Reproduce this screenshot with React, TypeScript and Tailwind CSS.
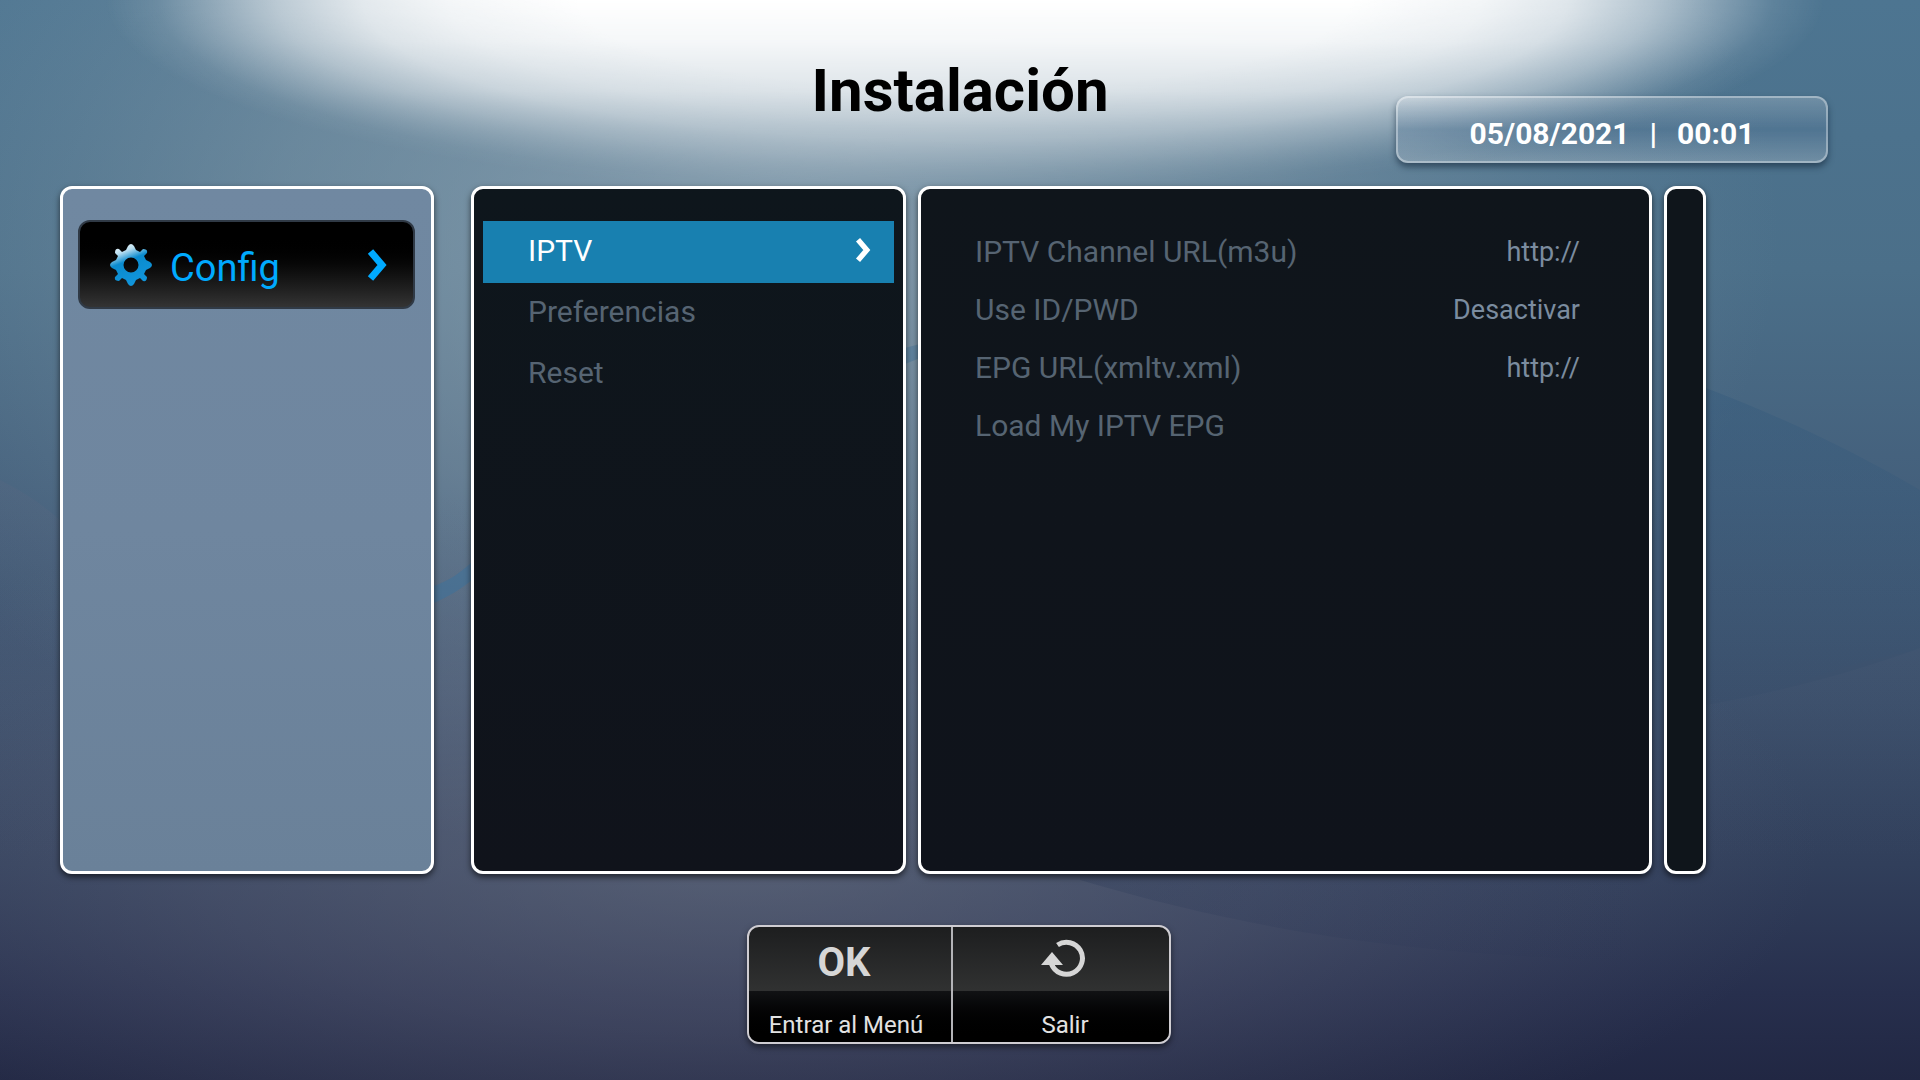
import type { ReactNode } from "react"

const menuItems = ["IPTV", "Preferencias", "Reset"]

const settings = [
  { label: "IPTV Channel URL(m3u)", value: "http://" },
  { label: "Use ID/PWD", value: "Desactivar" },
  { label: "EPG URL(xmltv.xml)", value: "http://" },
  { label: "Load My IPTV EPG", value: "" },
]

function Backdrop() {
  return (
    <svg
      className="absolute inset-0 h-full w-full"
      viewBox="0 0 1920 1080"
      preserveAspectRatio="none"
      aria-hidden="true"
    >
      <defs>
        <linearGradient id="base" x1="0" y1="0" x2="0" y2="1">
          <stop offset="0" stopColor="#4d7591" />
          <stop offset="0.25" stopColor="#4b6f89" />
          <stop offset="0.45" stopColor="#44607c" />
          <stop offset="0.65" stopColor="#3b4f6b" />
          <stop offset="0.8" stopColor="#313f5b" />
          <stop offset="0.92" stopColor="#272f4d" />
          <stop offset="1" stopColor="#212743" />
        </linearGradient>
        <radialGradient id="halo" cx="0.5" cy="0.5" r="0.5">
          <stop offset="0" stopColor="#a9b9c4" stopOpacity="0.65" />
          <stop offset="0.5" stopColor="#94a7b3" stopOpacity="0.42" />
          <stop offset="1" stopColor="#7b94a5" stopOpacity="0" />
        </radialGradient>
        <radialGradient id="floor" cx="0.5" cy="0.5" r="0.5">
          <stop offset="0" stopColor="#7d8290" stopOpacity="0.5" />
          <stop offset="0.5" stopColor="#73778a" stopOpacity="0.3" />
          <stop offset="1" stopColor="#6a6f86" stopOpacity="0" />
        </radialGradient>
        <radialGradient id="glow" cx="0.5" cy="0.5" r="0.5">
          <stop offset="0.45" stopColor="#fff" />
          <stop offset="0.6" stopColor="#fff" stopOpacity="0.93" />
          <stop offset="0.7" stopColor="#fff" stopOpacity="0.82" />
          <stop offset="0.8" stopColor="#fff" stopOpacity="0.57" />
          <stop offset="0.88" stopColor="#fff" stopOpacity="0.3" />
          <stop offset="0.94" stopColor="#fff" stopOpacity="0.1" />
          <stop offset="1" stopColor="#fff" stopOpacity="0" />
        </radialGradient>
        <linearGradient id="fade" x1="0" y1="0" x2="0" y2="240" gradientUnits="userSpaceOnUse">
          <stop offset="0" stopColor="#fff" />
          <stop offset="0.17" stopColor="#fff" stopOpacity="0.93" />
          <stop offset="0.38" stopColor="#fff" stopOpacity="0.75" />
          <stop offset="0.55" stopColor="#fff" stopOpacity="0.48" />
          <stop offset="0.72" stopColor="#fff" stopOpacity="0.28" />
          <stop offset="1" stopColor="#fff" stopOpacity="0" />
        </linearGradient>
        <mask id="glowFade" maskUnits="userSpaceOnUse" x="0" y="0" width="1920" height="240" style={{ maskType: "alpha" }}>
          <rect width="1920" height="240" fill="url(#fade)" />
        </mask>
        <linearGradient id="wave" x1="0" y1="0" x2="0" y2="1">
          <stop offset="0" stopColor="#2c557a" stopOpacity="0.3" />
          <stop offset="1" stopColor="#2c557a" stopOpacity="0" />
        </linearGradient>
        <linearGradient id="hill" x1="0" y1="0" x2="0" y2="1">
          <stop offset="0" stopColor="#5f6880" stopOpacity="0.3" />
          <stop offset="1" stopColor="#5f6880" stopOpacity="0" />
        </linearGradient>
        <linearGradient id="shade" x1="0" y1="0" x2="1" y2="0">
          <stop offset="0" stopColor="#1f3050" stopOpacity="0.2" />
          <stop offset="1" stopColor="#1f2a50" stopOpacity="0" />
        </linearGradient>
      </defs>
      <rect width="1920" height="1080" fill="url(#base)" />
      <ellipse cx="780" cy="230" rx="1000" ry="640" fill="url(#halo)" />
      <ellipse cx="740" cy="850" rx="1080" ry="370" fill="url(#floor)" />
      <path d="M1706 388C1790 420 1860 455 1920 490V650C1850 660 1780 690 1706 720Z" fill="url(#wave)" />
      <path d="M1706 705C1790 690 1860 670 1920 648V860H1706Z" fill="url(#hill)" opacity="0.3" />
      <path d="M434 586C450 580 460 573 472 562V580C462 588 450 596 434 603Z" fill="#3f7199" opacity="0.6" />
      <path d="M905 348L920 344V358L905 364Z" fill="#4a789c" opacity="0.5" />
      <path d="M0 480C40 500 60 520 70 530V860H0Z" fill="url(#hill)" opacity="0.7" />
      <path d="M1080 880C1250 930 1400 955 1652 962V860H1080Z" fill="url(#shade)" />
      <ellipse cx="965" cy="0" rx="860" ry="200" fill="url(#glow)" mask="url(#glowFade)" />
    </svg>
  )
}

function Panel({ className, children }: { className: string; children?: ReactNode }) {
  return (
    <div className={`rounded-xl border-3 border-white shadow-[0_3px_6px_rgba(0,0,0,0.6)] ${className}`}>
      {children}
    </div>
  )
}

function GearIcon() {
  return (
    <svg className="h-11 w-11" viewBox="-22 -22 44 44" aria-hidden="true">
      <defs>
        <linearGradient id="gear" x1="0.2" y1="0" x2="0.6" y2="1">
          <stop offset="0" stopColor="#f4fafd" />
          <stop offset="0.2" stopColor="#b9def0" />
          <stop offset="0.42" stopColor="#0a8bce" />
          <stop offset="1" stopColor="#1296dc" />
        </linearGradient>
      </defs>
      <path
        fill="url(#gear)"
        fillRule="evenodd"
        d="M-3 -19Q0 -23 3 -19L5 -15L9 -13L12 -16Q17 -16 16 -12L13 -9L15 -5L19 -3Q23 0 19 3L15 5L13 9L16 12Q16 17 12 16L9 13L5 15L3 19Q0 23 -3 19L-5 15L-9 13L-12 16Q-17 16 -16 12L-13 9L-15 5L-19 3Q-23 0 -19 -3L-15 -5L-13 -9L-16 -12Q-16 -17 -12 -16L-9 -13L-5 -15ZM0 -7.5A7.5 7.5 0 1 0 0 7.5A7.5 7.5 0 1 0 0 -7.5Z"
      />
    </svg>
  )
}

function Chevron({ className }: { className: string }) {
  return (
    <svg className={className} viewBox="0 0 20 34" fill="none" aria-hidden="true">
      <path d="M3.500 3.500L15 17L3.500 30.500" stroke="currentColor" strokeWidth="7" />
    </svg>
  )
}

function ReturnIcon() {
  return (
    <svg className="h-10 w-11" viewBox="0 0 44 40" fill="none" aria-hidden="true">
      <path d="M16.500 6A16 16 0 1 1 10.500 25" stroke="#d6d6d6" strokeWidth="5" />
      <path d="M0 26L11 13L22 26Z" fill="#d6d6d6" />
    </svg>
  )
}

export default function App() {
  return (
    <div className="relative isolate min-h-screen overflow-hidden font-['Roboto','Liberation_Sans',sans-serif]">
      <Backdrop />
      <div className="relative flex min-h-screen flex-col">
        <header className="grid grid-cols-[1fr_auto_1fr] pr-[92px]">
          <h1 className="col-start-2 pt-[55px] pl-[92px] text-[60px] leading-[72px] font-bold text-black">
            Instalación
          </h1>
          <div className="mt-24 flex h-[67px] w-[432px] items-center justify-center gap-5 justify-self-end rounded-xl border-2 border-white/35 bg-linear-to-b from-white/20 via-[#5a7b9c]/30 to-white/20 pt-2 text-[30px] font-bold text-white shadow-[0_4px_6px_rgba(20,40,60,0.6)]">
            <span>05/08/2021</span>
            <span>|</span>
            <time>00:01</time>
          </div>
        </header>

        <main className="mt-[23px] mr-[214px] ml-[60px] flex h-[688px]">
          <Panel className="mr-[37px] w-[374px] bg-linear-to-b from-[#7088a1] via-[#6f869f] to-[#6a8199] pt-[31px] pr-4 pl-[15px]">
            <button className="flex h-[89px] w-full items-center rounded-xl border-2 border-[#303a46] bg-linear-to-b from-black from-15% to-[#343434] pt-px pr-[26px] pl-[29px] text-[38px] text-[#00aaff]">
              <GearIcon />
              <span className="mt-[6px] ml-[17px]">Config</span>
              <Chevron className="ml-auto h-[34px] w-5" />
            </button>
          </Panel>

          <Panel className="mr-3 w-[435px] bg-linear-to-b from-[#0e161c] to-[#10131b] px-[9px] pt-8">
            <nav>
              {menuItems.map((item, index) => (
                <button
                  key={item}
                  className={
                    index === 0
                      ? "flex h-[62px] w-full items-center justify-between bg-[#1880b0] pr-[22px] pb-1 pl-[45px] text-[30px] text-white"
                      : "flex h-[61px] w-full items-center pb-1 pl-[45px] text-[30px] text-[#566472]"
                  }
                >
                  {item}
                  {index === 0 && <Chevron className="h-[26px] w-[18px]" />}
                </button>
              ))}
            </nav>
          </Panel>

          <Panel className="mr-3 flex-1 bg-linear-to-b from-[#0f151b] to-[#0f131b] pt-[33px] pr-[69px] pl-[54px]">
            <dl>
              {settings.map(({ label, value }) => (
                <div key={label} className="flex h-[58px] items-center justify-between">
                  <dt className="text-[30px] text-[#566472]">{label}</dt>
                  <dd className="pt-0.5 text-[27px] text-[#7b8c9f]">{value}</dd>
                </div>
              ))}
            </dl>
          </Panel>

          <Panel className="w-[42px] bg-[#0f151b]" />
        </main>

        <footer className="mt-[51px] flex justify-center pr-0.5">
          <div className="flex h-[119px] w-[424px] overflow-hidden rounded-xl border-2 border-[#cfcdd2] bg-linear-to-b from-[#1d1e1f] via-[#303131] via-54% to-[#303131] shadow-[0_3px_6px_rgba(0,0,0,0.5)]">
            <button className="flex w-[204px] flex-col border-r-2 border-[#b4b4b8] text-center">
              <span className="flex h-16 items-center justify-center pt-2 pr-3 text-[40px] font-bold text-[#d6d6d6]">OK</span>
              <span className="flex flex-1 items-end justify-center bg-linear-to-b from-[#111214] to-black pr-2 pb-px text-[24px] leading-8 text-[#e2e2e2]">
                Entrar al Menú
              </span>
            </button>
            <button className="flex flex-1 flex-col text-center">
              <span className="flex h-16 items-center justify-center pl-1">
                <ReturnIcon />
              </span>
              <span className="flex flex-1 items-end justify-center bg-linear-to-b from-[#111214] to-black pb-px pl-2 text-[24px] leading-8 text-[#e2e2e2]">
                Salir
              </span>
            </button>
          </div>
        </footer>
      </div>
    </div>
  )
}
